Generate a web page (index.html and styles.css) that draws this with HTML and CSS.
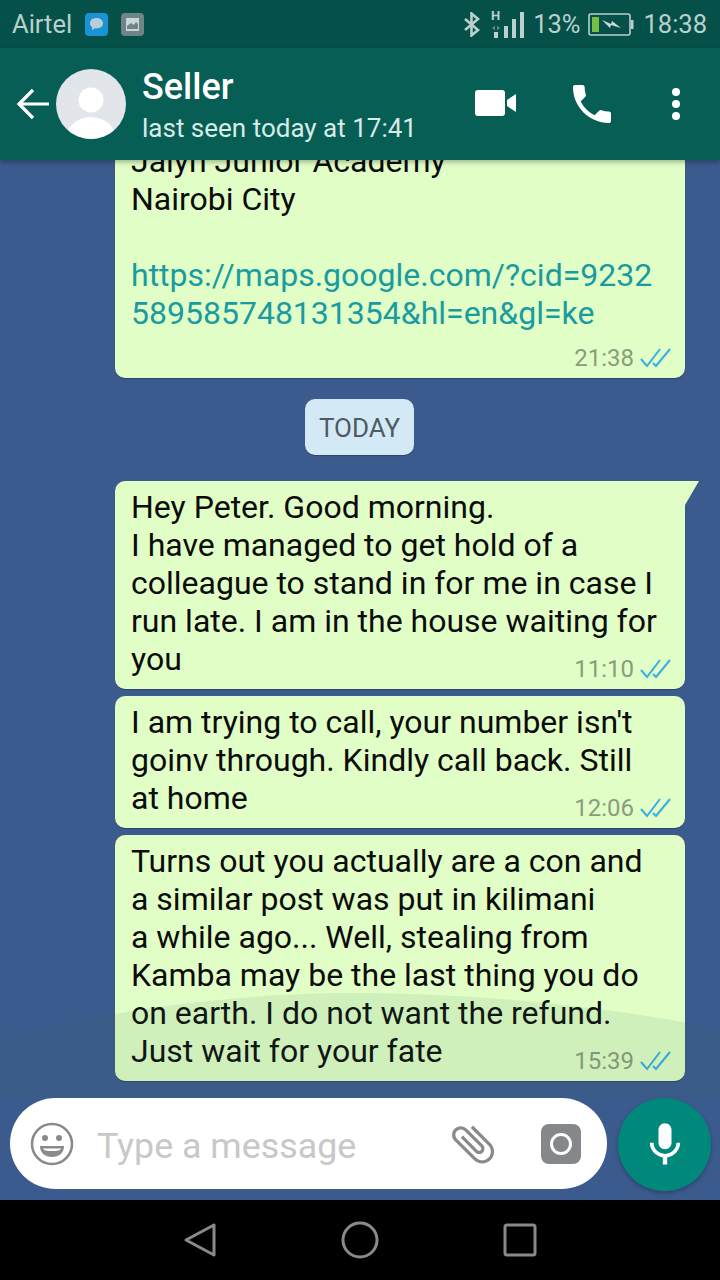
FILE: index.html
```html
<!DOCTYPE html>
<html lang="en">
<head>
<meta charset="utf-8">
<title>Seller</title>
<link rel="stylesheet" href="styles.css">
</head>
<body>
<div class="phone">
  <div class="status">
    <div class="status-left">
      <span class="carrier">Airtel</span>
      <svg class="note" width="23" height="23" viewBox="0 0 23 23"><rect width="23" height="23" rx="4" fill="#1a93d6"/><path d="M11.500 5c-4 0-6.500 2.200-6.500 5.200 0 1.700.9 3.100 2.300 4l-.5 3 3.200-2c.5.1 1 .1 1.500.1 4 0 6.500-2.200 6.500-5.100S15.500 5 11.500 5z" fill="#b9cfd6"/></svg>
      <svg class="note" width="23" height="23" viewBox="0 0 23 23"><rect width="23" height="23" rx="4" fill="#6f8487"/><rect x="5" y="5" width="13" height="13" fill="#c9d5d6"/><path d="M6 13l4-3 3 2 2-3 2 2v5H6z" fill="#6f8487"/></svg>
    </div>
    <div class="status-right">
      <svg width="18" height="25" viewBox="0 0 18 25"><path d="M2 7l13 11-6.500 5.500V1.500L15 7 2 18" fill="none" stroke="#b9d0cc" stroke-width="2.600"/></svg>
      <svg class="signal" width="36" height="30" viewBox="0 0 36 30"><text x="1" y="11" class="h-mark">H</text><path d="M2 19l3-2v4zM10 19l-3-2v4z" fill="#6f9089"/><rect x="4" y="23" width="4" height="6" fill="#b9d0cc"/><rect x="14" y="17" width="4" height="12" fill="#b9d0cc"/><rect x="22" y="10" width="4" height="19" fill="#b9d0cc"/><rect x="30" y="3" width="4" height="26" fill="#b9d0cc"/></svg>
      <span class="pct">13%</span>
      <svg width="46" height="23" viewBox="0 0 46 23"><rect x="1" y="1" width="41" height="21" rx="2" fill="none" stroke="#b9d0cc" stroke-width="1.600"/><rect x="43" y="7" width="2.500" height="9" fill="#b9d0cc"/><rect x="4" y="4" width="7" height="15" fill="#76c043"/><path d="M14 7l9 4 1-3 9 7-10-3-1 3z" fill="#c9dcd8"/></svg>
      <span class="clock">18:38</span>
    </div>
  </div>

  <header class="bar">
    <svg class="back" width="34" height="34" viewBox="0 0 34 34"><path d="M33 17H3M17 3L3 17l14 14" fill="none" stroke="#fff" stroke-width="3.200"/></svg>
    <svg class="avatar" width="70" height="70" viewBox="0 0 70 70"><defs><clipPath id="av"><circle cx="35" cy="35" r="35"/></clipPath></defs><circle cx="35" cy="35" r="35" fill="#e2e5e9"/><g clip-path="url(#av)"><circle cx="35" cy="31" r="12.500" fill="#fff"/><ellipse cx="35" cy="70" rx="25" ry="22" fill="#fff"/></g></svg>
    <div class="who">
      <div class="name">Seller</div>
      <div class="seen">last seen today at 17:41</div>
    </div>
    <div class="actions">
      <svg width="42" height="27" viewBox="0 0 42 27"><rect x="0" y="0" width="30" height="26" rx="3" fill="#fff"/><path d="M32 10l9-6v18l-9-6z" fill="#fff"/></svg>
      <svg width="38" height="38" viewBox="3 3 18 18"><path fill="#fff" d="M6.620 10.790c1.440 2.830 3.760 5.140 6.590 6.590l2.200-2.200c.27-.27.67-.36 1.020-.24 1.120.37 2.330.57 3.570.57.55 0 1 .45 1 1V20c0 .55-.45 1-1 1-9.390 0-17-7.610-17-17 0-.55.45-1 1-1h3.500c.55 0 1 .45 1 1 0 1.250.2 2.450.57 3.570.11.35.03.74-.25 1.020l-2.200 2.200z"/></svg>
      <svg class="dots" width="8" height="32" viewBox="0 0 8 32"><circle cx="4" cy="4" r="4" fill="#fff"/><circle cx="4" cy="16" r="4" fill="#fff"/><circle cx="4" cy="28" r="4" fill="#fff"/></svg>
    </div>
  </header>

  <main class="chat">
    <div class="thread">
      <div class="bubble with-row">
        <p class="text">Jalyn Junior Academy<br>Nairobi City<br><br><span class="link">https://maps.google.com/?cid=9232<br>589585748131354&amp;hl=en&amp;gl=ke</span></p>
        <div class="meta"><span>21:38</span><svg width="31" height="20" viewBox="0 0 31 20"><path d="M1 11l6 7L20 1M13 15l3 3L30 1" fill="none" stroke="#35aee2" stroke-width="2"/></svg></div>
      </div>
      <div class="day">TODAY</div>
      <div class="bubble tail">
        <p class="text">Hey Peter. Good morning.<br>I have managed to get hold of a<br>colleague to stand in for me in case I<br>run late. I am in the house waiting for<br>you</p>
        <div class="meta"><span>11:10</span><svg width="31" height="20" viewBox="0 0 31 20"><path d="M1 11l6 7L20 1M13 15l3 3L30 1" fill="none" stroke="#35aee2" stroke-width="2"/></svg></div>
      </div>
      <div class="bubble">
        <p class="text">I am trying to call, your number isn't<br>goinv through. Kindly call back. Still<br>at home</p>
        <div class="meta"><span>12:06</span><svg width="31" height="20" viewBox="0 0 31 20"><path d="M1 11l6 7L20 1M13 15l3 3L30 1" fill="none" stroke="#35aee2" stroke-width="2"/></svg></div>
      </div>
      <div class="bubble">
        <p class="text">Turns out you actually are a con and<br>a similar post was put in kilimani<br>a while ago... Well, stealing from<br>Kamba may be the last thing you do<br>on earth. I do not want the refund.<br>Just wait for your fate</p>
        <div class="meta"><span>15:39</span><svg width="31" height="20" viewBox="0 0 31 20"><path d="M1 11l6 7L20 1M13 15l3 3L30 1" fill="none" stroke="#35aee2" stroke-width="2"/></svg></div>
      </div>
    </div>
    <svg class="wave" width="720" height="120" viewBox="0 0 720 120" preserveAspectRatio="none"><path d="M0 62C120 27 260 15 350 15c130 0 260 14 370 36v69H0z" fill="#3b7264" fill-opacity=".1"/></svg>
  </main>

  <div class="composer">
    <div class="pill">
      <svg width="44" height="44" viewBox="0 0 44 44"><circle cx="22" cy="22" r="20" fill="none" stroke="#8a8a8a" stroke-width="2.600"/><circle cx="15" cy="16" r="3" fill="#8a8a8a"/><circle cx="29" cy="16" r="3" fill="#8a8a8a"/><path d="M10 24h24c0 7-5 11-12 11s-12-4-12-11z" fill="#8a8a8a"/><path d="M13 26.500h18c-1 2-3 2.500-9 2.500s-8-.5-9-2.500z" fill="#fff"/></svg>
      <span class="hint">Type a message</span>
      <svg class="clip" width="52" height="52" viewBox="0 0 24 24"><path transform="rotate(-45 12 12)" fill="#8a8a8a" d="M16.500 6v11.500c0 2.210-1.790 4-4 4s-4-1.790-4-4V5c0-1.380 1.120-2.500 2.500-2.500s2.500 1.120 2.500 2.500v10.500c0 .55-.45 1-1 1s-1-.45-1-1V6H10v9.500c0 1.380 1.120 2.500 2.500 2.500s2.500-1.120 2.500-2.500V5c0-2.210-1.790-4-4-4S7 2.790 7 5v12.500c0 3.040 2.460 5.500 5.500 5.500s5.500-2.460 5.500-5.500V6h-1.500z"/></svg>
      <svg width="40" height="40" viewBox="0 0 40 40"><rect width="40" height="40" rx="8" fill="#85878b"/><circle cx="20" cy="20" r="9.500" fill="#85878b" stroke="#fff" stroke-width="3"/></svg>
    </div>
    <div class="mic">
      <svg width="52" height="52" viewBox="0 0 24 24"><path fill="#fff" d="M12 14c1.660 0 3-1.340 3-3V5c0-1.660-1.340-3-3-3S9 3.340 9 5v6c0 1.660 1.340 3 3 3zm5.300-3c0 3-2.540 5.100-5.300 5.100S6.700 14 6.700 11H5c0 3.410 2.720 6.230 6 6.720V21h2v-3.280c3.280-.48 6-3.300 6-6.720h-1.700z"/></svg>
    </div>
  </div>

  <nav class="nav">
    <svg width="34" height="36" viewBox="0 0 34 36"><path d="M3 18L31 3v30z" fill="none" stroke="#8a8a8a" stroke-width="3" stroke-linejoin="round"/></svg>
    <svg width="38" height="38" viewBox="0 0 38 38"><circle cx="19" cy="19" r="17" fill="none" stroke="#8a8a8a" stroke-width="3"/></svg>
    <svg width="34" height="34" viewBox="0 0 34 34"><rect x="2" y="2" width="30" height="30" rx="2" fill="none" stroke="#8a8a8a" stroke-width="3"/></svg>
  </nav>
</div>
</body>
</html>
```

FILE: styles.css
```css
* { box-sizing: border-box; }
html, body { margin: 0; padding: 0; }
body { font-family: Roboto, "Noto Sans", sans-serif; background: #000; }

.phone { width: 720px; height: 1280px; display: flex; flex-direction: column; overflow: hidden; background: #3b5a8d; }

.status { height: 48px; flex: none; background: #05514a; color: #b9d0cc; display: flex; justify-content: space-between; align-items: center; padding: 0 13px 0 12px; font-size: 25.5px; }
.status-left { display: flex; align-items: center; gap: 13px; }
.status-right { display: flex; align-items: center; gap: 7px; }
.signal { margin-left: 2px; }
.h-mark { font: 700 13px Roboto, sans-serif; fill: #b9d0cc; }
.pct { margin-right: 1px; }
.clock { margin-left: 2px; }

.bar { height: 112px; flex: none; background: #075e54; display: flex; align-items: center; color: #fff; position: relative; z-index: 2; box-shadow: 0 2px 5px rgba(0,0,0,.3); padding: 0 40px 0 16px; }
.back { margin-right: 6px; }
.avatar { margin-top: -1px; }
.who { margin: 4px 0 0 16px; flex: 1; }
.name { font-size: 36px; font-weight: 500; line-height: 40px; }
.seen { font-size: 26px; line-height: 34px; color: #d7ebe7; margin-top: 4px; }
.actions { display: flex; align-items: center; gap: 56px; margin-top: -1px; }
.dots { margin-left: 5px; }

.chat { flex: 1; min-height: 0; position: relative; overflow: hidden; }
.thread { height: 100%; display: flex; flex-direction: column; justify-content: flex-end; align-items: flex-end; overflow: hidden; padding: 0 35px 17px 0; }

.bubble { position: relative; width: 570px; flex: none; background: #e1fec6; border-radius: 10px; padding: 7px 16px 11px; box-shadow: 0 1px 1px rgba(0,0,0,.25); margin-bottom: 7px; }
.bubble:last-child { margin-bottom: 0; }
.with-row { padding-bottom: 46px; margin-bottom: 0; }
.tail { border-top-right-radius: 0; }
.tail::after { content: ""; position: absolute; top: 0; left: 100%; width: 14px; height: 24px; background: #e1fec6; clip-path: polygon(0 0, 100% 0, 0 100%); }

.text { margin: 0; font-size: 32px; line-height: 38px; color: #0c0c0c; }
.link { color: #1a9ba0; }
.meta { position: absolute; right: 14px; bottom: 8px; display: flex; align-items: center; gap: 6px; font-size: 24px; line-height: 24px; color: #8b9c7d; }

.day { flex: none; width: 109px; height: 56px; margin: 21px 271px 26px 0; background: #d4e9f6; border-radius: 10px; color: #4e5b63; font-size: 26px; padding-top: 2px; display: flex; align-items: center; justify-content: center; box-shadow: 0 1px 1px rgba(0,0,0,.25); }

.wave { position: absolute; left: 0; bottom: 0; pointer-events: none; }

.composer { height: 102px; flex: none; display: flex; align-items: flex-start; padding-left: 10px; gap: 11px; }
.pill { width: 597px; height: 91px; background: #fff; border-radius: 46px; display: flex; align-items: center; padding: 0 26px 0 20px; }
.hint { flex: 1; margin-left: 23px; font-size: 35.800px; color: #c8c8c8; padding-top: 4px; }
.clip { margin-right: 42px; }
.mic { width: 93px; height: 93px; background: #00897b; border-radius: 50%; display: flex; align-items: center; justify-content: center; box-shadow: 0 2px 4px rgba(0,0,0,.25); }

.nav { height: 80px; flex: none; background: #000; display: flex; align-items: center; justify-content: center; gap: 124px; }
```
